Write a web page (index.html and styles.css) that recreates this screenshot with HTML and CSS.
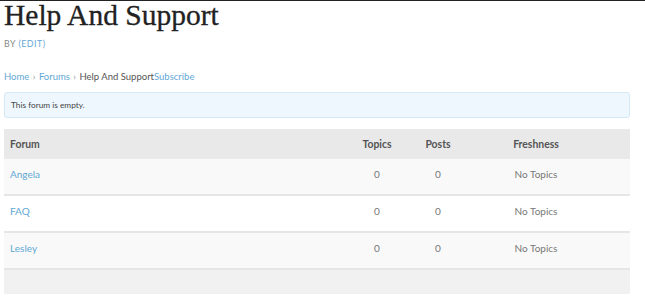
FILE: index.html
```html
<!DOCTYPE html>
<html lang="en">
<head>
    <meta charset="UTF-8">
    <title>Help And Support</title>
    <link rel="stylesheet" href="styles.css">
</head>
<body>
    <div class="topbar"></div>
    <main class="page">
        <h1 class="title">Help And Support</h1>
        <div class="byline">BY <a href="#">(EDIT)</a></div>
        <div class="crumbs">
            <a href="#">Home</a> <span class="sep">›</span> <a href="#">Forums</a> <span class="sep">›</span> Help And Support<a href="#">Subscribe</a>
        </div>
        <div class="notice">This forum is empty.</div>
        <div class="forums">
            <div class="row head">
                <div>Forum</div>
                <div class="num">Topics</div>
                <div class="num">Posts</div>
                <div class="num">Freshness</div>
            </div>
            <div class="row odd">
                <div><a href="#">Angela</a></div>
                <div class="num">0</div>
                <div class="num">0</div>
                <div class="num">No Topics</div>
            </div>
            <div class="row">
                <div><a href="#">FAQ</a></div>
                <div class="num">0</div>
                <div class="num">0</div>
                <div class="num">No Topics</div>
            </div>
            <div class="row odd">
                <div><a href="#">Lesley</a></div>
                <div class="num">0</div>
                <div class="num">0</div>
                <div class="num">No Topics</div>
            </div>
            <div class="foot"></div>
        </div>
    </main>
</body>
</html>
```

FILE: styles.css
```css
/* base */
body {
    margin: 0;
    padding: 0;
    background-color: #fff;
    font-family: Lato, "Open Sans", sans-serif;
    font-size: 9px;
    color: #555;
}

a {
    color: #62a8d4;
    text-decoration: none;
}

.topbar {
    height: 1px;
    background-color: #222;
}

.page {
    padding: 0 15px 0 4px;
}

.title {
    margin: 0;
    font-family: "Liberation Serif", serif;
    font-weight: normal;
    font-size: 29.5px;
    line-height: 28px;
    color: #222;
    -webkit-text-stroke: 0.3px #222;
}

.byline {
    margin-top: 9px;
    font-size: 8.8px;
    letter-spacing: 0.5px;
    color: #888;
}

.crumbs {
    margin-top: 22px;
    font-size: 9.5px;
    line-height: 12px;
    color: #555;
}

.crumbs .sep {
    margin: 0 1px;
    color: #999;
}

.notice {
    margin-top: 9px;
    height: 24px;
    line-height: 24px;
    padding: 0 6px;
    font-size: 8.3px;
    color: #444;
    background-color: #eef7fe;
    border: 1px solid #d4e8f6;
    border-radius: 3px;
}

.forums {
    margin-top: 11px;
    font-size: 10px;
}

.row {
    display: grid;
    grid-template-columns: 1fr 60px 62px 134px;
    padding: 9px 27px 0 6px;
    height: 26px;
    line-height: 12px;
    border-bottom: 2px solid #e6e6e6;
    background-color: #fff;
    color: #777;
}

.row.odd {
    background-color: #f9f9f9;
}

.row.head {
    height: 21px;
    border-bottom: none;
    background-color: #e9e9e9;
    font-size: 10.4px;
    font-weight: bold;
    color: #555;
}

.num {
    text-align: center;
}

.foot {
    height: 24px;
    background-color: #f1f1f1;
}
```
